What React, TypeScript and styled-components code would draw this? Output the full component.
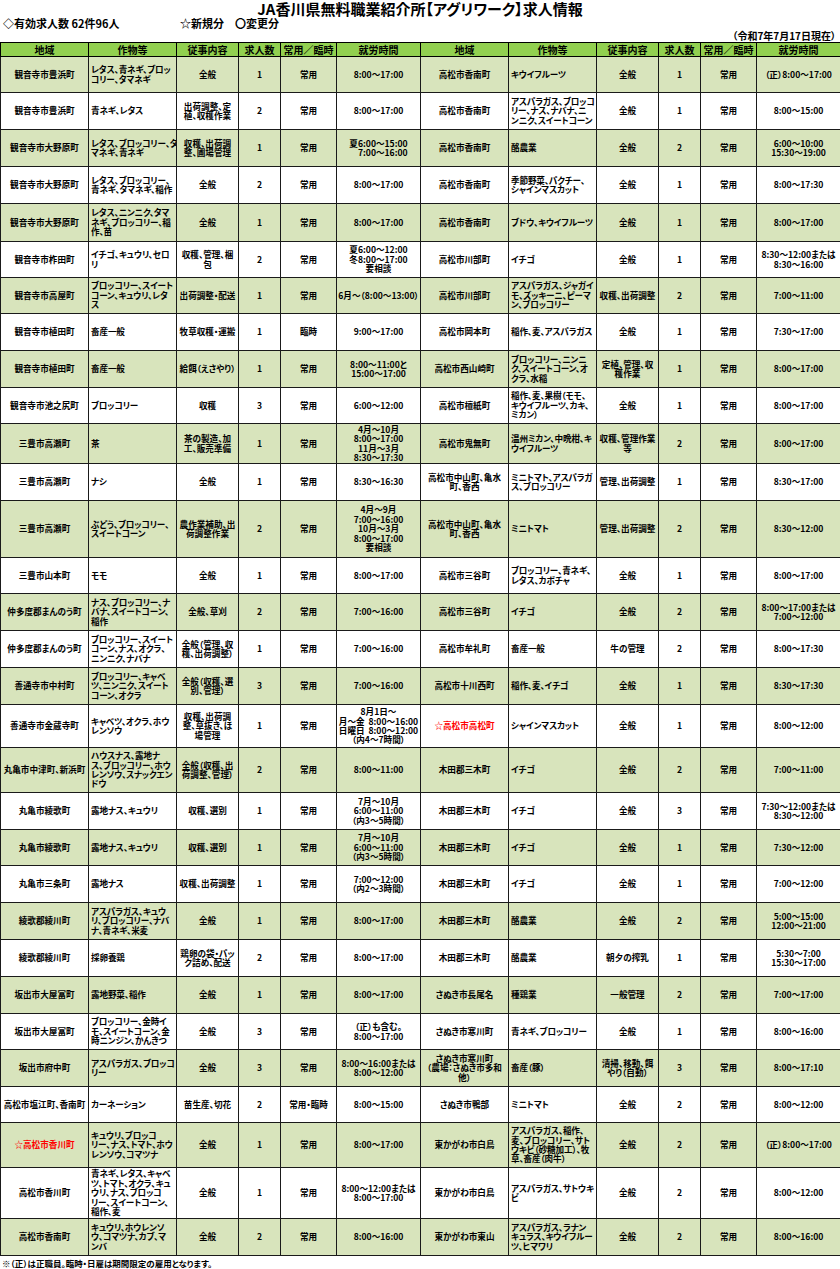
import * as React from "react";
import styled, { createGlobalStyle } from "styled-components";

type Job = [string, string, string, string, string, string];
type JobRow = { h: number; left: Job; right: Job };

const GlobalStyle = createGlobalStyle`
  body {
    margin: 0;
    background: #fff;
  }
`;

const SPage = styled.div`
  width: 840px;
  font-family: "Noto Sans CJK JP", "Noto Sans", sans-serif;
  font-feature-settings: "palt";
  font-weight: 700;
  color: #000;
`;

const STitle = styled.h1`
  margin: 0;
  height: 17px;
  font-size: 15px;
  line-height: 17px;
  font-weight: 700;
  text-align: center;
`;

const SInfo = styled.div`
  display: flex;
  height: 13px;
  padding-left: 3px;
  font-size: 11px;
  line-height: 13px;
`;

const SInfoCount = styled.div`
  width: 177px;
`;

const SDate = styled.div`
  height: 12px;
  padding-right: 4px;
  font-size: 10px;
  line-height: 12px;
  text-align: right;
`;

const STable = styled.table`
  width: 840px;
  border-collapse: collapse;
  table-layout: fixed;
  border: 1px solid #000;
`;

const SCol = styled.col<{ $w: number }>`
  width: ${(p) => p.$w}px;
`;

const SHeadRow = styled.tr`
  height: 14px;
  background: #92d050;
`;

const SHead = styled.th<{ $gray?: boolean }>`
  padding: 0;
  border: 1px solid #000;
  border-left-color: ${(p) => (p.$gray ? "#8c8c8c" : "#000")};
  font-size: 10px;
  line-height: 12px;
  font-weight: 700;
  text-align: center;
  white-space: nowrap;
  overflow: hidden;
`;

const SRow = styled.tr<{ $shade: boolean; $h: number }>`
  height: ${(p) => p.$h}px;
  background: ${(p) => (p.$shade ? "#d8e4bc" : "#fff")};
`;

const SCell = styled.td<{ $left?: boolean; $red?: boolean; $gray?: boolean }>`
  padding: ${(p) => (p.$left ? "0 0 0 2px" : "0 1px")};
  border: 1px solid #1a1a1a;
  border-left-color: ${(p) => (p.$gray ? "#8c8c8c" : "#1a1a1a")};
  font-size: 8.6px;
  line-height: 9.4px;
  letter-spacing: ${(p) => (p.$left ? "-0.15px" : "0")};
  text-align: ${(p) => (p.$left ? "left" : "center")};
  color: ${(p) => (p.$red ? "#ff0000" : "#000")};
  white-space: pre;
  overflow: hidden;
  vertical-align: middle;
`;

const SFooter = styled.div`
  padding: 2px 0 0 2px;
  font-size: 8.5px;
  line-height: 11px;
`;

const rows: JobRow[] = [
  { h: 36, left: ["観音寺市豊浜町", "レタス、青ネギ、ブロッ\nコリー、タマネギ", "全般", "1", "常用", "8:00〜17:00"], right: ["高松市香南町", "キウイフルーツ", "全般", "1", "常用", "（正）8:00〜17:00"] },
  { h: 37, left: ["観音寺市豊浜町", "青ネギ、レタス", "出荷調整、定\n植、収穫作業", "2", "常用", "8:00〜17:00"], right: ["高松市香南町", "アスパラガス、ブロッコ\nリー、ナス、ナバナ、ニ\nンニク、スイートコーン", "全般", "1", "常用", "8:00〜15:00"] },
  { h: 37, left: ["観音寺市大野原町", "レタス、ブロッコリー、タ\nマネギ、青ネギ", "収穫、出荷調\n整、圃場管理", "1", "常用", "夏6:00〜15:00\n　7:00〜16:00"], right: ["高松市香南町", "酪農業", "全般", "2", "常用", "6:00〜10:00\n15:30〜19:00"] },
  { h: 37, left: ["観音寺市大野原町", "レタス、ブロッコリー、\n青ネギ、タマネギ、稲作", "全般", "2", "常用", "8:00〜17:00"], right: ["高松市香南町", "季節野菜、パクチー、\nシャインマスカット", "全般", "1", "常用", "8:00〜17:30"] },
  { h: 38, left: ["観音寺市大野原町", "レタス、ニンニク、タマ\nネギ、ブロッコリー、稲\n作、苗", "全般", "1", "常用", "8:00〜17:00"], right: ["高松市香南町", "ブドウ、キウイフルーツ", "全般", "1", "常用", "8:00〜17:00"] },
  { h: 36, left: ["観音寺市柞田町", "イチゴ、キュウリ、セロ\nリ", "収穫、管理、梱\n包", "2", "常用", "夏6:00〜12:00\n冬8:00〜17:00\n要相談"], right: ["高松市川部町", "イチゴ", "全般", "1", "常用", "8:30〜12:00または\n8:30〜16:00"] },
  { h: 36, left: ["観音寺市高屋町", "ブロッコリー、スイート\nコーン、キュウリ、レタ\nス", "出荷調整・配送", "1", "常用", "6月〜（8:00〜13:00）"], right: ["高松市川部町", "アスパラガス、ジャガイ\nモ、ズッキーニ、ピーマ\nン、ブロッコリー", "収穫、出荷調整", "2", "常用", "7:00〜11:00"] },
  { h: 37, left: ["観音寺市植田町", "畜産一般", "牧草収穫・運搬", "1", "臨時", "9:00〜17:00"], right: ["高松市岡本町", "稲作、麦、アスパラガス", "全般", "1", "常用", "7:30〜17:00"] },
  { h: 37, left: ["観音寺市植田町", "畜産一般", "給餌（えさやり）", "1", "常用", "8:00〜11:00と\n15:00〜17:00"], right: ["高松市西山崎町", "ブロッコリー、ニンニ\nク、スイートコーン、オ\nクラ、水稲", "定植、管理、収\n穫作業", "1", "常用", "8:00〜17:00"] },
  { h: 36, left: ["観音寺市池之尻町", "ブロッコリー", "収穫", "3", "常用", "6:00〜12:00"], right: ["高松市檀紙町", "稲作、麦、果樹（モモ、\nキウイフルーツ、カキ、\nミカン）", "全般", "1", "常用", "8:00〜17:00"] },
  { h: 40, left: ["三豊市高瀬町", "茶", "茶の製造、加\n工、販売準備", "1", "常用", "4月〜10月\n8:00〜17:00\n11月〜3月\n8:30〜17:30"], right: ["高松市鬼無町", "温州ミカン、中晩柑、キ\nウイフルーツ", "収穫、管理作業\n等", "2", "常用", "8:00〜17:00"] },
  { h: 37, left: ["三豊市高瀬町", "ナシ", "全般", "1", "常用", "8:30〜16:30"], right: ["高松市中山町、亀水\n町、香西", "ミニトマト、アスパラガ\nス、ブロッコリー", "管理、出荷調整", "1", "常用", "8:30〜17:00"] },
  { h: 57, left: ["三豊市高瀬町", "ぶどう、ブロッコリー、\nスイートコーン", "農作業補助、出\n荷調整作業", "2", "常用", "4月〜9月\n7:00〜16:00\n10月〜3月\n8:00〜17:00\n要相談"], right: ["高松市中山町、亀水\n町、香西", "ミニトマト", "管理、出荷調整", "2", "常用", "8:30〜12:00"] },
  { h: 36, left: ["三豊市山本町", "モモ", "全般", "1", "常用", "8:00〜17:00"], right: ["高松市三谷町", "ブロッコリー、青ネギ、\nレタス、カボチャ", "全般", "1", "常用", "8:00〜17:00"] },
  { h: 37, left: ["仲多度郡まんのう町", "ナス、ブロッコリー、ナ\nバナ、スイートコーン、\n稲作", "全般、草刈", "2", "常用", "7:00〜16:00"], right: ["高松市三谷町", "イチゴ", "全般", "2", "常用", "8:00〜17:00または\n7:00〜12:00"] },
  { h: 37, left: ["仲多度郡まんのう町", "ブロッコリー、スイート\nコーン、ナス、オクラ、\nニンニク、ナバナ", "全般（管理、収\n穫、出荷調整）", "1", "常用", "7:00〜16:00"], right: ["高松市牟礼町", "畜産一般", "牛の管理", "2", "常用", "8:00〜17:30"] },
  { h: 37, left: ["善通寺市中村町", "ブロッコリー、キャベ\nツ、ニンニク、スイート\nコーン、オクラ", "全般（収穫、選\n別、管理）", "3", "常用", "7:00〜16:00"], right: ["高松市十川西町", "稲作、麦、イチゴ", "全般", "1", "常用", "8:30〜17:30"] },
  { h: 43, left: ["善通寺市金蔵寺町", "キャベツ、オクラ、ホウ\nレンソウ", "収穫、出荷調\n整、草抜き、ほ\n場管理", "1", "常用", "8月1日〜\n月〜金  8:00〜16:00\n日曜日  8:00〜12:00\n（内4〜7時間）"], right: ["☆高松市高松町", "シャインマスカット", "全般", "1", "常用", "8:00〜12:00"] },
  { h: 45, left: ["丸亀市中津町、新浜町", "ハウスナス、露地ナ\nス、ブロッコリー、ホウ\nレンソウ、スナックエン\nドウ", "全般（収穫、出\n荷調整、管理）", "2", "常用", "8:00〜11:00"], right: ["木田郡三木町", "イチゴ", "全般", "2", "常用", "7:00〜11:00"] },
  { h: 37, left: ["丸亀市綾歌町", "露地ナス、キュウリ", "収穫、選別", "1", "常用", "7月〜10月\n6:00〜11:00\n（内3〜5時間）"], right: ["木田郡三木町", "イチゴ", "全般", "3", "常用", "7:30〜12:00または\n8:30〜12:00"] },
  { h: 36, left: ["丸亀市綾歌町", "露地ナス、キュウリ", "収穫、選別", "1", "常用", "7月〜10月\n6:00〜11:00\n（内3〜5時間）"], right: ["木田郡三木町", "イチゴ", "全般", "1", "常用", "7:30〜12:00"] },
  { h: 37, left: ["丸亀市三条町", "露地ナス", "収穫、出荷調整", "1", "常用", "7:00〜12:00\n（内2〜3時間）"], right: ["木田郡三木町", "イチゴ", "全般", "1", "常用", "7:00〜12:00"] },
  { h: 37, left: ["綾歌郡綾川町", "アスパラガス、キュウ\nリ、ブロッコリー、ナバ\nナ、青ネギ、米麦", "全般", "1", "常用", "8:00〜17:00"], right: ["木田郡三木町", "酪農業", "全般", "2", "常用", "5:00〜15:00\n12:00〜21:00"] },
  { h: 37, left: ["綾歌郡綾川町", "採卵養鶏", "鶏卵の袋・パッ\nク詰め、配送", "2", "常用", "8:00〜17:00"], right: ["木田郡三木町", "酪農業", "朝夕の搾乳", "1", "常用", "5:30〜7:00\n15:30〜17:00"] },
  { h: 37, left: ["坂出市大屋冨町", "露地野菜、稲作", "全般", "1", "常用", "8:00〜17:00"], right: ["さぬき市長尾名", "種鶏業", "一般管理", "2", "常用", "7:00〜17:00"] },
  { h: 36, left: ["坂出市大屋冨町", "ブロッコリー、金時イ\nモ、スイートコーン、金\n時ニンジン、かんきつ", "全般", "3", "常用", "（正）も含む。\n8:00〜17:00"], right: ["さぬき市寒川町", "青ネギ、ブロッコリー", "全般", "1", "常用", "8:00〜16:00"] },
  { h: 37, left: ["坂出市府中町", "アスパラガス、ブロッコ\nリー", "全般", "3", "常用", "8:00〜16:00または\n8:00〜12:00"], right: ["さぬき市寒川町\n（農場：さぬき市多和\n他）", "畜産（豚）", "清掃、移動、餌\nやり（自動）", "3", "常用", "8:00〜17:10"] },
  { h: 36, left: ["高松市塩江町、香南町", "カーネーション", "苗生産、切花", "2", "常用・臨時", "8:00〜15:00"], right: ["さぬき市鴨部", "ミニトマト", "全般", "2", "常用", "8:00〜12:00"] },
  { h: 45, left: ["☆高松市香川町", "キュウリ、ブロッコ\nリー、ナス、トマト、ホウ\nレンソウ、コマツナ", "全般", "1", "常用", "8:00〜17:00"], right: ["東かがわ市白鳥", "アスパラガス、稲作、\n麦、ブロッコリー、サト\nウキビ（砂糖加工）、牧\n草、畜産（肉牛）", "全般", "2", "常用", "（正）8:00〜17:00"] },
  { h: 51, left: ["高松市香川町", "青ネギ、レタス、キャベ\nツ、トマト、オクラ、キュ\nウリ、ナス、ブロッコ\nリー、スイートコーン、\n稲作、麦", "全般", "1", "常用", "8:00〜12:00または\n8:00〜17:00"], right: ["東かがわ市白鳥", "アスパラガス、サトウキ\nビ", "全般", "2", "常用", "8:00〜12:00"] },
  { h: 37, left: ["高松市香南町", "キュウリ、ホウレンソ\nウ、コマツナ、カブ、マ\nンバ", "全般", "2", "常用", "8:00〜16:00"], right: ["東かがわ市東山", "アスパラガス、ラナン\nキュラス、キウイフルー\nツ、ヒマワリ", "全般", "2", "常用", "8:00〜16:00"] },
];

const headers = ["地域", "作物等", "従事内容", "求人数", "常用／臨時", "就労時間"];
const widths = [88, 88, 62, 42, 56, 84];

const JobCells = ({ job }: { job: Job }) => (
  <>
    <SCell $red={job[0].startsWith("☆")}>{job[0]}</SCell>
    <SCell $left>{job[1]}</SCell>
    <SCell>{job[2]}</SCell>
    <SCell $gray>{job[3]}</SCell>
    <SCell>{job[4]}</SCell>
    <SCell>{job[5]}</SCell>
  </>
);

const App = () => {
  return (
    <SPage>
      <GlobalStyle />
      <STitle>JA香川県無料職業紹介所【アグリワーク】求人情報</STitle>
      <SInfo>
        <SInfoCount>◇有効求人数 62件96人</SInfoCount>
        <div>☆新規分　〇変更分</div>
      </SInfo>
      <SDate>（令和7年7月17日現在）</SDate>
      <STable>
        <colgroup>
          {[...widths, ...widths].map((w, i) => (
            <SCol key={i} $w={w} />
          ))}
        </colgroup>
        <thead>
          <SHeadRow>
            {[...headers, ...headers].map((h, i) => (
              <SHead key={i} $gray={i % 6 === 3}>
                {h}
              </SHead>
            ))}
          </SHeadRow>
        </thead>
        <tbody>
          {rows.map((row, i) => (
            <SRow key={i} $h={row.h} $shade={i % 2 === 0}>
              <JobCells job={row.left} />
              <JobCells job={row.right} />
            </SRow>
          ))}
        </tbody>
      </STable>
      <SFooter>※（正）は正職員。臨時・日雇は期間限定の雇用となります。</SFooter>
    </SPage>
  );
};

export default App;
